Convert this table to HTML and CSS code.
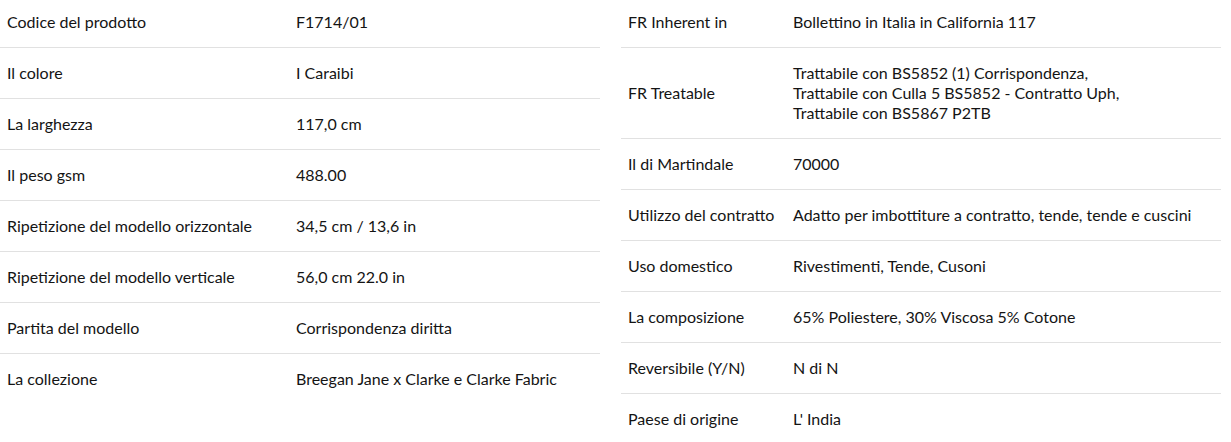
FILE: index.html
```html
<!DOCTYPE html>
<html lang="it">
<head>
<meta charset="utf-8">
<title>Specifiche prodotto</title>
<link rel="stylesheet" href="styles.css">
</head>
<body>
<div class="specs">
  <table class="spec-table spec-left">
    <tr><td class="label">Codice del prodotto</td><td class="value">F1714/01</td></tr>
    <tr><td class="label">Il colore</td><td class="value">I Caraibi</td></tr>
    <tr><td class="label">La larghezza</td><td class="value">117,0 cm</td></tr>
    <tr><td class="label">Il peso gsm</td><td class="value">488.00</td></tr>
    <tr><td class="label">Ripetizione del modello orizzontale</td><td class="value">34,5 cm / 13,6 in</td></tr>
    <tr><td class="label">Ripetizione del modello verticale</td><td class="value">56,0 cm 22.0 in</td></tr>
    <tr><td class="label">Partita del modello</td><td class="value">Corrispondenza diritta</td></tr>
    <tr><td class="label">La collezione</td><td class="value">Breegan Jane x Clarke e Clarke Fabric</td></tr>
  </table>
  <table class="spec-table spec-right">
    <tr><td class="label">FR Inherent in</td><td class="value">Bollettino in Italia in California 117</td></tr>
    <tr><td class="label">FR Treatable</td><td class="value">Trattabile con BS5852 (1) Corrispondenza,<br>Trattabile con Culla 5 BS5852 - Contratto Uph,<br>Trattabile con BS5867 P2TB</td></tr>
    <tr><td class="label">Il di Martindale</td><td class="value">70000</td></tr>
    <tr><td class="label">Utilizzo del contratto</td><td class="value">Adatto per imbottiture a contratto, tende, tende e cuscini</td></tr>
    <tr><td class="label">Uso domestico</td><td class="value">Rivestimenti, Tende, Cusoni</td></tr>
    <tr><td class="label">La composizione</td><td class="value">65% Poliestere, 30% Viscosa 5% Cotone</td></tr>
    <tr><td class="label">Reversibile (Y/N)</td><td class="value">N di N</td></tr>
    <tr><td class="label">Paese di origine</td><td class="value">L' India</td></tr>
  </table>
</div>
</body>
</html>
```
FILE: styles.css
```css
html, body {
  margin: 0;
  padding: 0;
  background: #ffffff;
}
body {
  font-family: Lato, "Noto Sans", sans-serif;
  font-size: 16px;
  line-height: 20px;
  color: #141414;
}
.specs {
  display: grid;
  grid-template-columns: 600px 600px;
  column-gap: 21px;
  align-items: start;
  margin-top: -3px;
}
.spec-table {
  width: 600px;
  border-collapse: collapse;
  table-layout: fixed;
}
.spec-table td {
  padding: 15px 7px;
  vertical-align: middle;
  text-align: left;
}
.spec-table tr {
  border-bottom: 1px solid #e1e1e1;
}
.spec-table tr:last-child {
  border-bottom: none;
}
.spec-left .label { width: 275px; }
.spec-right .label { width: 151px; }
```
